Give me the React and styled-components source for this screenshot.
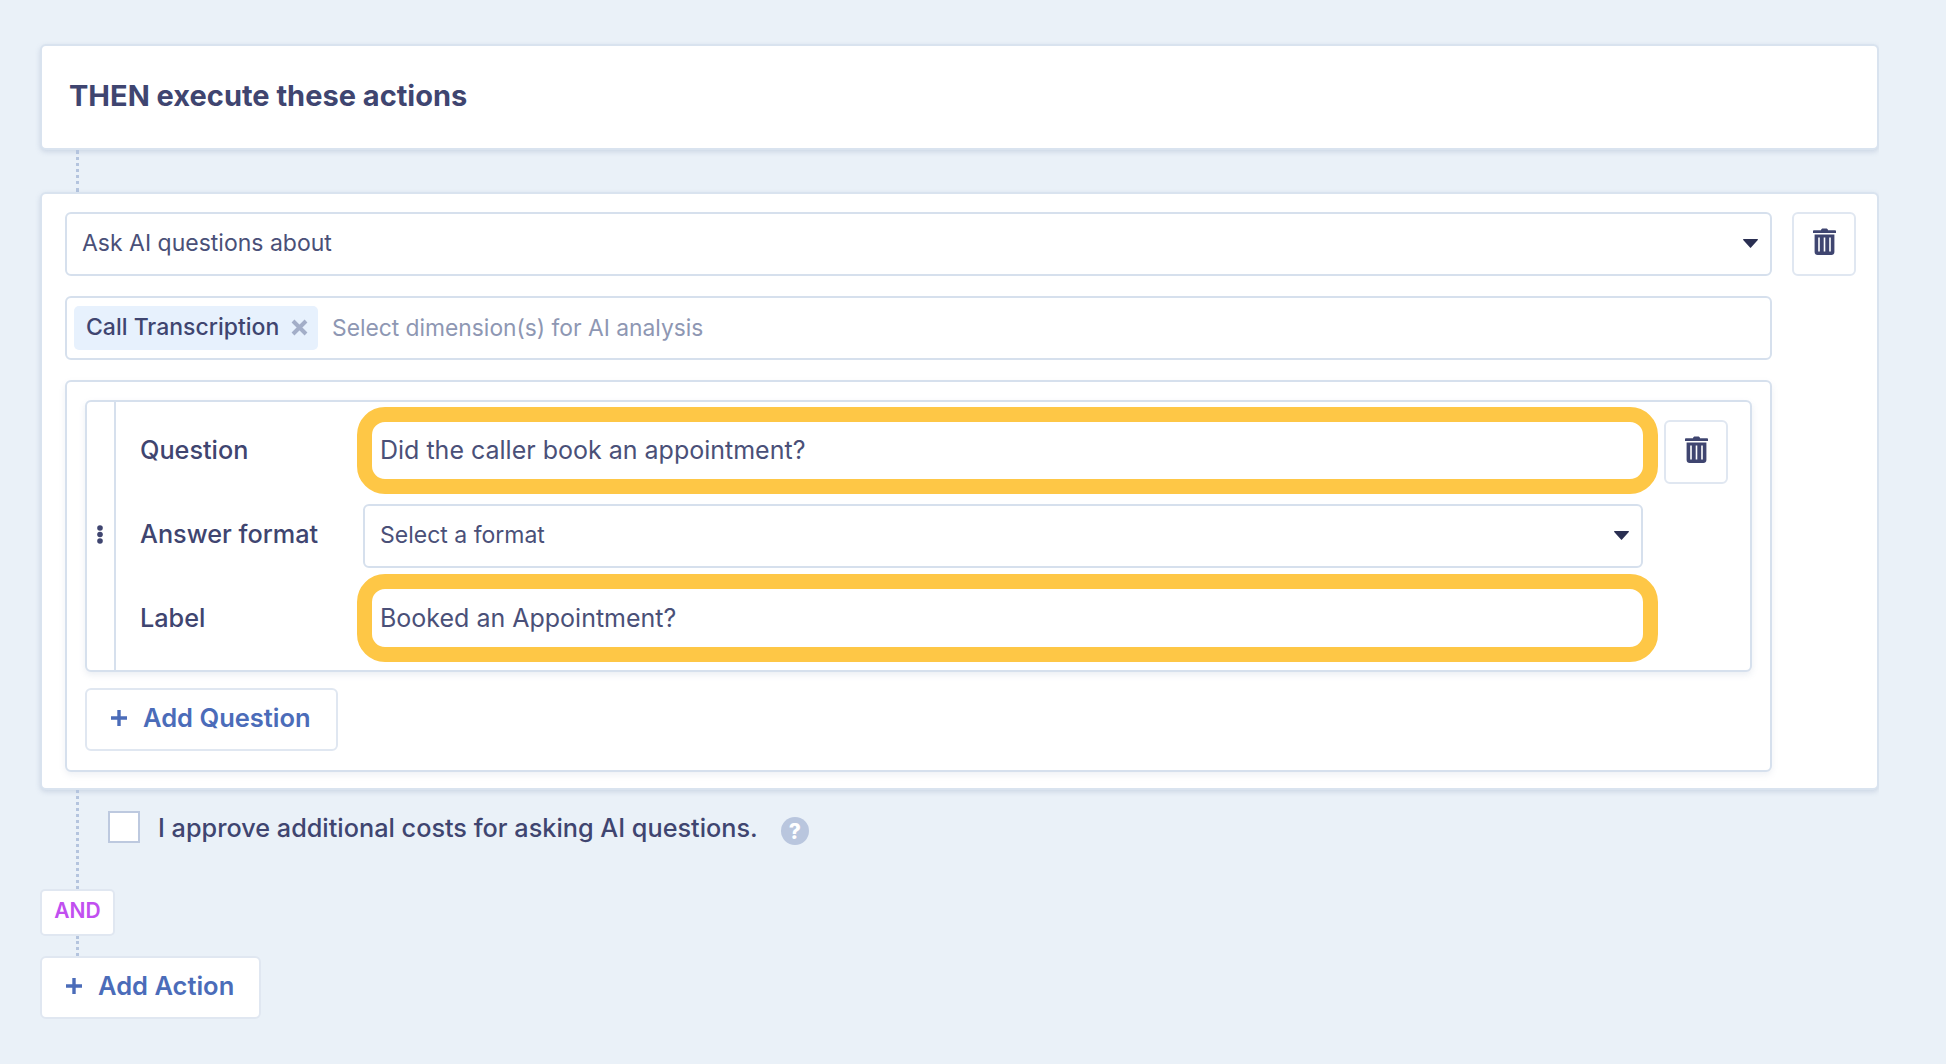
import styled, { createGlobalStyle } from "styled-components";

const GlobalStyle = createGlobalStyle`
  * {
    box-sizing: border-box;
  }
  body {
    margin: 0;
    background: #eaf1f8;
    font-family: Inter, "Liberation Sans", sans-serif;
    color: #3f4570;
  }
`;

const Page = styled.div`
  width: 1879px;
  height: 1064px;
  padding: 44px 0 0 40px;
  overflow: hidden;
`;

const Card = styled.section`
  background: #fff;
  border: 2px solid #d9e3ef;
  border-radius: 6px;
  box-shadow: 0 2px 5px rgba(120, 140, 175, 0.25);
`;

const TitleCard = styled(Card)`
  height: 106px;
  padding: 0 27px;
  display: flex;
  align-items: center;
`;

const Title = styled.h2`
  margin: 0 0 3px;
  font-size: 29px;
  font-weight: 700;
  color: #3f4570;
`;

const Connector = styled.div`
  width: 0;
  height: ${(p) => p.$height}px;
  margin-left: 36px;
  border-left: 3px dotted #b4c4de;
`;

const ActionCard = styled(Card)`
  height: 598px;
  padding: 18px 21px 0 23px;
  display: grid;
  grid-template-columns: 1707px 64px;
  grid-template-rows: 64px 64px 392px;
  column-gap: 20px;
  row-gap: 20px;
`;

const Box = styled.div`
  background: #fff;
  border: 2px solid #d6e0ed;
  border-radius: 6px;
  display: flex;
  align-items: center;
`;

const SelectBox = styled(Box)`
  height: 64px;
  padding: 0 12px 2px 15px;
  justify-content: space-between;
  font-size: 23px;
  color: #4a5078;
`;

const TextBox = styled(SelectBox)`
  position: relative;
  padding-bottom: 4px;
  border-color: transparent;
  font-size: 25px;
`;

const IconButton = styled.button`
  width: 64px;
  height: 64px;
  padding: 0 0 5px;
  background: #fff;
  border: 2px solid #e0e7f1;
  border-radius: 6px;
  display: flex;
  align-items: center;
  justify-content: center;
`;

const TagBox = styled(Box)`
  grid-column: 1;
  height: 64px;
  padding: 0 7px;
  gap: 14px;
`;

const Tag = styled.span`
  height: 44px;
  width: 244px;
  padding: 0 10px 2px 12px;
  background: #e7f1fd;
  border-radius: 5px;
  display: flex;
  align-items: center;
  justify-content: space-between;
  font-size: 23px;
  font-weight: 500;
  color: #3f4570;
`;

const Placeholder = styled.span`
  padding-bottom: 2px;
  font-size: 22.8px;
  color: #8e97b3;
`;

const QuestionsPanel = styled(Box)`
  grid-column: 1;
  height: 392px;
  padding: 18px 18px 0;
  flex-direction: column;
  align-items: stretch;
  gap: 16px;
  box-shadow: 0 3px 6px rgba(120, 140, 175, 0.12);
`;

const QuestionItem = styled.div`
  height: 272px;
  flex: none;
  background: #fff;
  border: 2px solid #d6e0ed;
  border-radius: 6px;
  display: flex;
  box-shadow: 0 3px 6px rgba(120, 140, 175, 0.15);
`;

const DragHandle = styled.div`
  width: 29px;
  flex: none;
  padding: 0 2px 4px 0;
  border-right: 2px solid #d6e0ed;
  display: flex;
  align-items: center;
  justify-content: center;
`;

const QuestionFields = styled.div`
  flex: 1;
  padding: 18px 22px 0 25px;
  display: grid;
  grid-template-columns: 222px 1280px 64px;
  grid-auto-rows: 64px;
  row-gap: 20px;
  align-items: center;
`;

const FieldLabel = styled.label`
  margin-left: -1px;
  padding-bottom: 4px;
  font-size: 25.25px;
  font-weight: 500;
  color: #3f4570;
`;

const TrashCell = styled.div`
  margin-left: 21px;
`;

const Highlight = styled.span`
  position: absolute;
  top: ${(p) => p.$top}px;
  right: -17px;
  bottom: -12px;
  left: -8px;
  border: 15px solid #fec746;
  border-radius: 28px;
  pointer-events: none;
`;

const AddButton = styled.button`
  height: 63px;
  width: ${(p) => p.$width}px;
  padding: 0 0 4px 23px;
  background: #fff;
  border: 2px solid #e0e7f1;
  border-radius: 6px;
  display: flex;
  align-items: center;
  gap: 15px;
  font-family: inherit;
  font-size: 25.5px;
  font-weight: 600;
  color: #4b6cb9;
`;

const ConsentRow = styled.div`
  height: 99px;
  margin-left: 36px;
  padding: 21px 0 0 29px;
  border-left: 3px dotted #b4c4de;
  display: flex;
  align-items: flex-start;
`;

const Checkbox = styled.span`
  width: 32px;
  height: 32px;
  flex: none;
  background: #fff;
  border: 2px solid #bdc9df;
`;

const ConsentText = styled.span`
  margin: 2px 0 0 18px;
  font-size: 25.25px;
  font-weight: 500;
  color: #3f4570;
`;

const HelpIcon = styled.span`
  width: 28px;
  height: 28px;
  margin: 6px 0 0 23px;
  border-radius: 50%;
  background: #b9c6de;
  color: #fff;
  display: flex;
  align-items: center;
  justify-content: center;
  font-size: 21px;
  font-weight: 800;
`;

const AndBadge = styled.div`
  width: 75px;
  height: 47px;
  padding-bottom: 4px;
  background: #fff;
  border: 2px solid #e0e7f1;
  border-radius: 5px;
  display: flex;
  align-items: center;
  justify-content: center;
  font-size: 21px;
  font-weight: 600;
  color: #c14ff0;
`;

function TrashIcon() {
  return (
    <svg width="23" height="27" viewBox="0 0 23 27" aria-hidden="true">
      <path
        fill="#3f4570"
        d="M8 2.2C8 1 9 .4 10 .4h3c1 0 2 .6 2 1.8h7.2c.4 0 .8.4.8.8V5H0V3c0-.4.4-.8.8-.8H8ZM1.6 6.6h19.8V24c0 1.7-1.3 3-3 3H4.6c-1.7 0-3-1.3-3-3V6.6Z"
      />
      <path
        fill="#fff"
        d="M5.2 9.4h1.6v14.2H5.2zM10.7 9.4h1.6v14.2h-1.6zM16.2 9.4h1.6v14.2h-1.6z"
      />
    </svg>
  );
}

function Caret() {
  return (
    <svg width="15" height="9" viewBox="0 0 15 9" aria-hidden="true">
      <path fill="#2a2f52" d="M.6 0h13.8c.5 0 .7.5.4.9L8 8.6c-.3.4-.7.4-1 0L.2.9C-.1.5.1 0 .6 0Z" />
    </svg>
  );
}

function PlusIcon() {
  return (
    <svg width="18" height="18" viewBox="0 0 18 18" aria-hidden="true">
      <path fill="none" stroke="#4b6cb9" strokeWidth="3.4" d="M9 1v16M1 9h16" />
    </svg>
  );
}

function CloseIcon() {
  return (
    <svg width="17" height="17" viewBox="0 0 17 17" aria-hidden="true">
      <path fill="none" stroke="#a3aec8" strokeWidth="4" d="M2 2l13 13M15 2L2 15" />
    </svg>
  );
}

function DragDots() {
  return (
    <svg width="6" height="19" viewBox="0 0 6 19" aria-hidden="true">
      <circle cx="3" cy="3" r="2.8" fill="#3f4570" />
      <circle cx="3" cy="9.5" r="2.8" fill="#3f4570" />
      <circle cx="3" cy="16" r="2.8" fill="#3f4570" />
    </svg>
  );
}

export default function App() {
  return (
    <Page>
      <GlobalStyle />
      <TitleCard>
        <Title>THEN execute these actions</Title>
      </TitleCard>
      <Connector $height={42} />
      <ActionCard>
        <SelectBox>
          Ask AI questions about
          <Caret />
        </SelectBox>
        <IconButton>
          <TrashIcon />
        </IconButton>
        <TagBox>
          <Tag>
            Call Transcription
            <CloseIcon />
          </Tag>
          <Placeholder>Select dimension(s) for AI analysis</Placeholder>
        </TagBox>
        <QuestionsPanel>
          <QuestionItem>
            <DragHandle>
              <DragDots />
            </DragHandle>
            <QuestionFields>
              <FieldLabel>Question</FieldLabel>
              <TextBox>
                Did the caller book an appointment?
                <Highlight $top={-15} />
              </TextBox>
              <TrashCell>
                <IconButton>
                  <TrashIcon />
                </IconButton>
              </TrashCell>
              <FieldLabel>Answer format</FieldLabel>
              <SelectBox>
                Select a format
                <Caret />
              </SelectBox>
              <span />
              <FieldLabel>Label</FieldLabel>
              <TextBox>
                Booked an Appointment?
                <Highlight $top={-16} />
              </TextBox>
            </QuestionFields>
          </QuestionItem>
          <AddButton $width={253}>
            <PlusIcon />
            Add Question
          </AddButton>
        </QuestionsPanel>
      </ActionCard>
      <ConsentRow>
        <Checkbox />
        <ConsentText>I approve additional costs for asking AI questions.</ConsentText>
        <HelpIcon>?</HelpIcon>
      </ConsentRow>
      <AndBadge>AND</AndBadge>
      <Connector $height={20} />
      <AddButton $width={221}>
        <PlusIcon />
        Add Action
      </AddButton>
    </Page>
  );
}
